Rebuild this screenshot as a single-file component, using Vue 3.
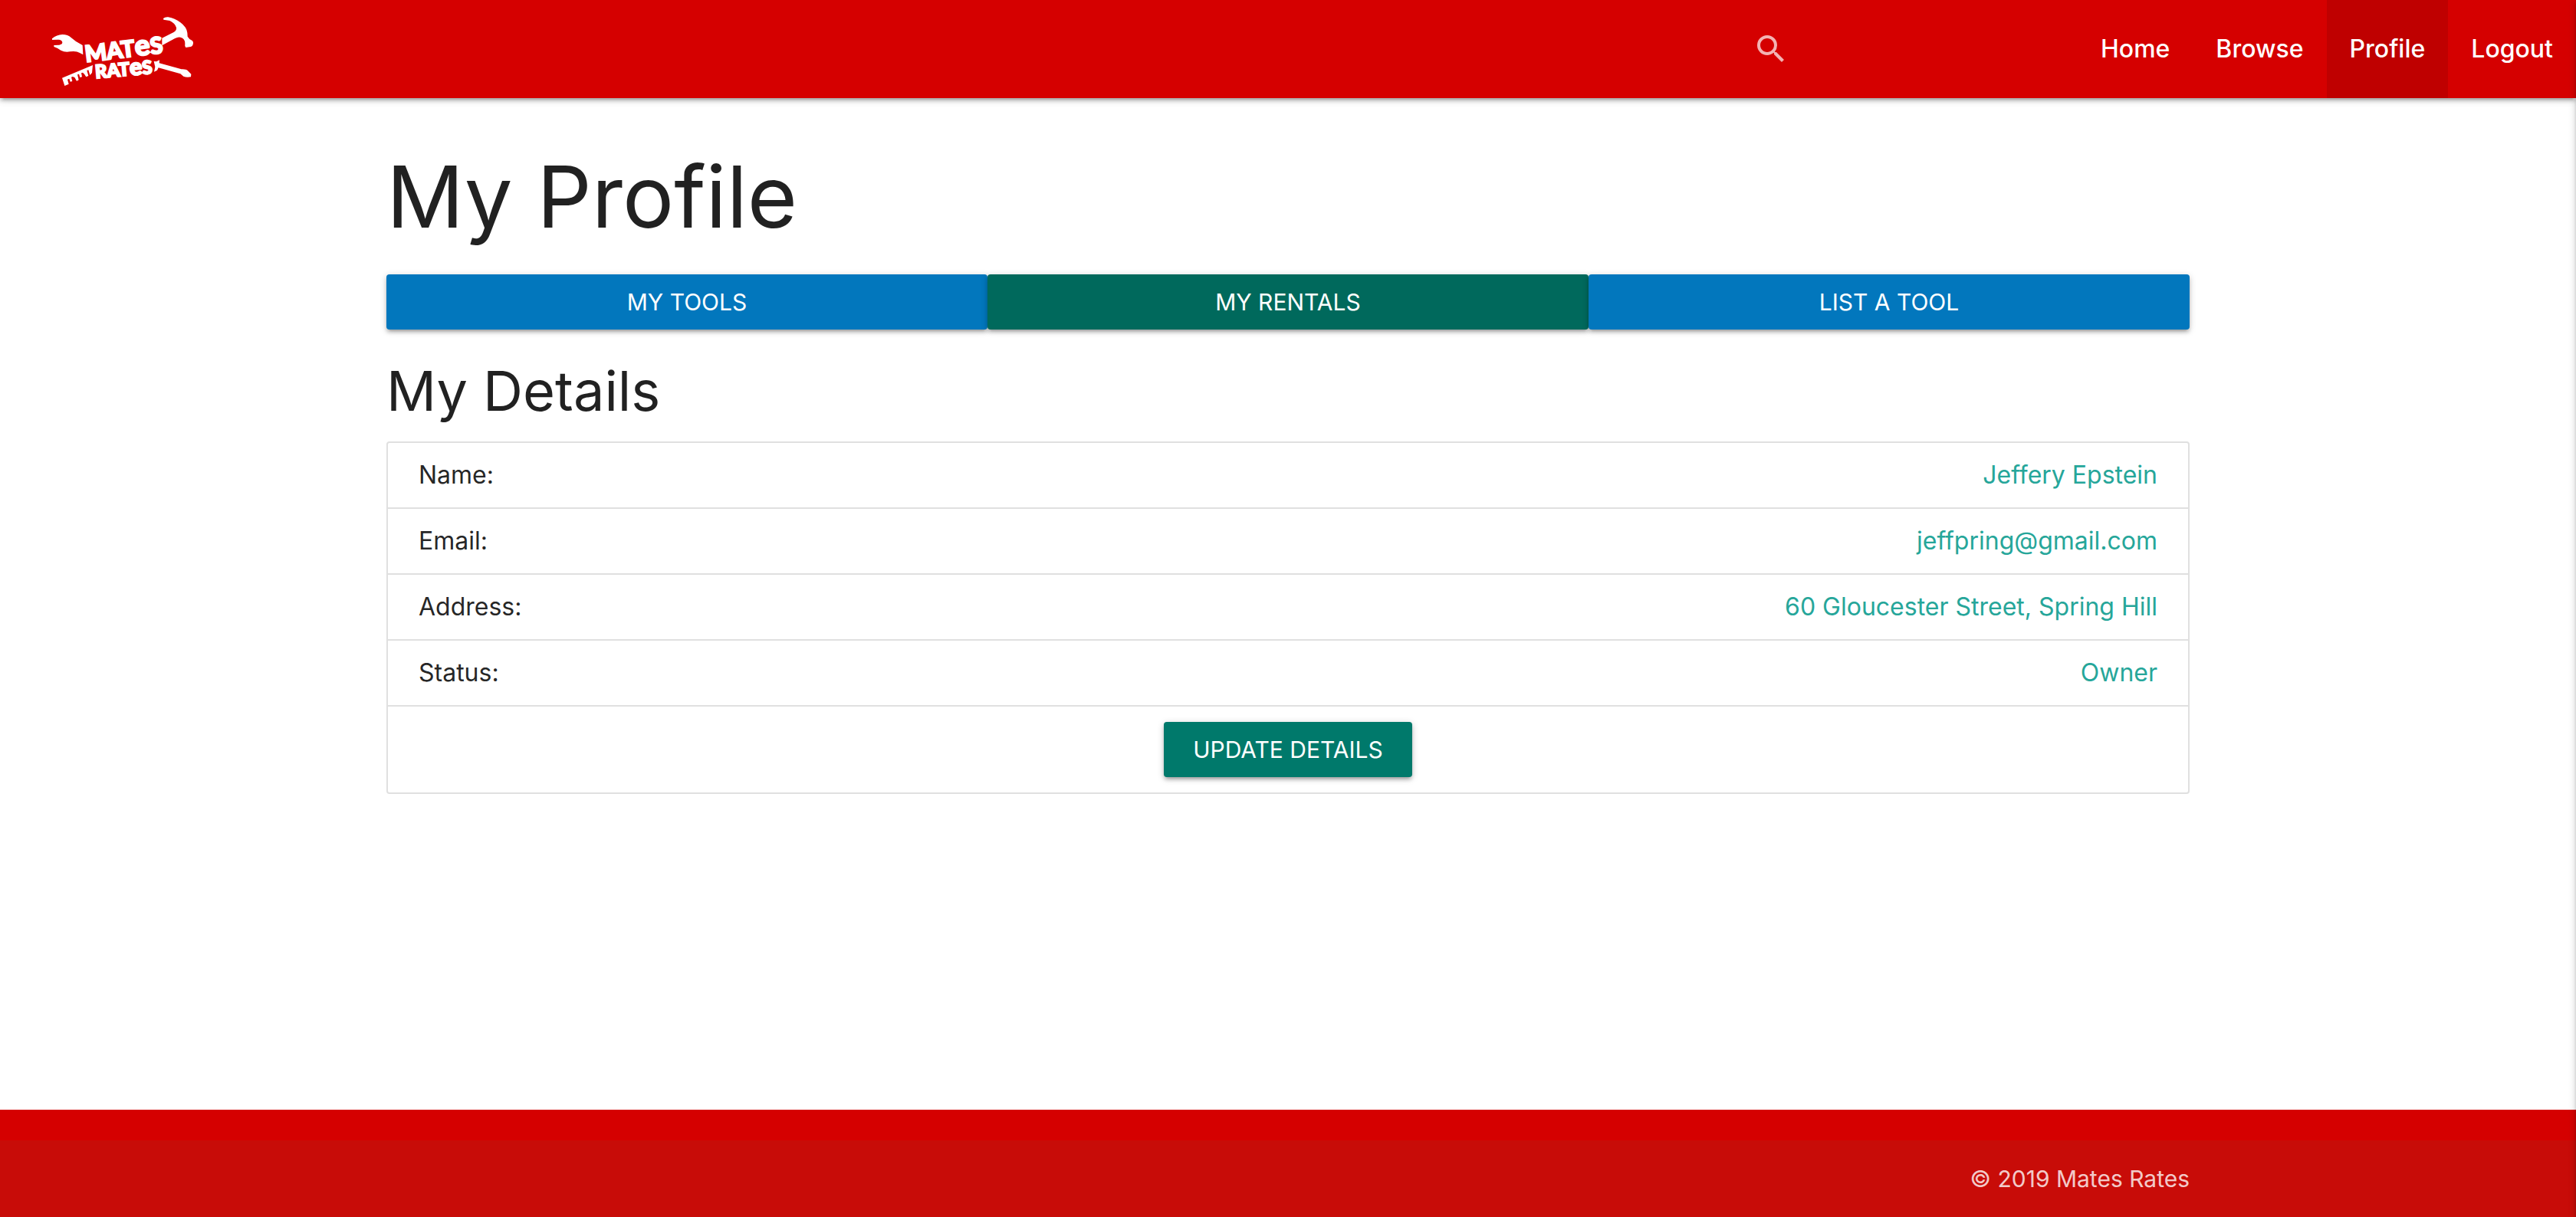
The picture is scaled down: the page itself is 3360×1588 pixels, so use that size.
<script setup>
const links = [
  { label: 'Home', href: '#home' },
  { label: 'Browse', href: '#browse' },
  { label: 'Profile', href: '#profile', active: true },
  { label: 'Logout', href: '#logout' },
]

const details = [
  { label: 'Name:', value: 'Jeffery Epstein' },
  { label: 'Email:', value: 'jeffpring@gmail.com' },
  { label: 'Address:', value: '60 Gloucester Street, Spring Hill' },
  { label: 'Status:', value: 'Owner' },
]
</script>

<template>
  <div class="page">
    <header class="navbar">
      <a class="brand" href="#home" aria-label="Mates Rates">
        <svg class="logo" viewBox="48 60 564 282" fill="#fff">
          <!-- wrench -->
          <path d="M54 151 Q72 136 94 135 Q116 135 128 147 Q146 164 173 177 L175 214 L162 207 Q148 198 124 202 Q104 206 88 197 Q76 188 61 183 L61 177 L82 176 Q94 174 94 166 Q92 155 78 155 L54 156 Z" />
          <!-- hammer -->
          <path d="M489 72 Q496 66 508 67 Q534 72 556 88 Q580 106 583 128 L584 143 Q590 154 602 159 Q608 164 605 174 Q602 184 591 184 L577 186 Q572 181 574 170 Q574 150 556 146 Q546 144 535 150 L484 178 L484 149 L530 126 Q542 119 540 108 Q534 90 514 81 L490 77 Z" />
          <!-- ruler -->
          <path d="M93 305 L213 255 L210 285 L202 294 L196 274 L190 276 L196 297 L187 301 L180 290 L174 284 L168 286 L171 301 L163 303 L159 290 L153 292 L158 313 L150 317 L142 303 L134 300 L129 302 L133 318 L125 320 L121 308 L114 311 L119 329 L103 336 Z" />
          <!-- screwdriver -->
          <path d="M452 240 L462 241 L474 235 L473 247 L560 271 Q578 270 584 276 L598 290 L597 301 Q580 304 568 299 L556 289 L470 265 L465 275 L453 281 L457 262 Z" />
          <text class="word" x="186" y="244" font-size="90" transform="rotate(-7 186 244)">MAT<tspan font-size="112">e</tspan>S</text>
          <text class="word" x="224" y="307" font-size="72" transform="rotate(-5 224 307)">RAT<tspan font-size="92">e</tspan>S</text>
        </svg>
      </a>
      <form class="search" role="search" @submit.prevent>
        <label for="search" aria-label="Search">
          <svg class="search-icon" viewBox="0 0 24 24" fill="currentColor">
            <path d="M15.5 14h-.79l-.28-.27A6.471 6.471 0 0 0 16 9.5 6.5 6.5 0 1 0 9.5 16c1.61 0 3.09-.59 4.23-1.57l.27.28v.79l5 4.99L20.49 19l-4.99-5zm-6 0C7.01 14 5 11.99 5 9.5S7.01 5 9.5 5 14 7.01 14 9.5 11.99 14 9.5 14z" />
          </svg>
        </label>
        <input id="search" type="search" />
      </form>
      <nav class="links">
        <a v-for="link in links" :key="link.label" :href="link.href" :class="{ active: link.active }">{{ link.label }}</a>
      </nav>
    </header>

    <main class="container">
      <h1>My Profile</h1>
      <div class="actions">
        <button type="button" class="btn blue">MY TOOLS</button>
        <button type="button" class="btn green">MY RENTALS</button>
        <button type="button" class="btn blue">LIST A TOOL</button>
      </div>
      <h2>My Details</h2>
      <div class="collection">
        <dl>
          <div v-for="item in details" :key="item.label" class="row">
            <dt>{{ item.label }}</dt>
            <dd>{{ item.value }}</dd>
          </div>
        </dl>
        <div class="update">
          <button type="button" class="btn teal">UPDATE DETAILS</button>
        </div>
      </div>
    </main>

    <footer class="footer">
      <div class="copyright">
        <p class="container">© 2019 Mates Rates</p>
      </div>
    </footer>

    <aside class="drawer" aria-hidden="true"></aside>
  </div>
</template>

<style>
body {
  margin: 0;
  background: #fff;
}
</style>

<style scoped>
.page {
  --depth: 0 4px 4px 0 rgba(0, 0, 0, 0.14), 0 6px 2px -4px rgba(0, 0, 0, 0.12), 0 2px 10px 0 rgba(0, 0, 0, 0.2);
  display: flex;
  flex-direction: column;
  min-height: 100vh;
  font-family: Inter, "Open Sans", sans-serif;
  font-size: 32px;
  line-height: 44px;
  color: rgba(0, 0, 0, 0.87);
}

.navbar {
  display: flex;
  align-items: center;
  height: 128px;
  background: #d50000;
  box-shadow: var(--depth);
}

.brand {
  margin: 0 auto 0 66px;
  padding-top: 6px;
}

.logo {
  display: block;
  width: 188px;
  height: 94px;
}

.word {
  font-family: Lato, sans-serif;
  font-weight: 900;
  stroke: #fff;
  stroke-width: 6;
}

.search {
  display: flex;
  align-items: center;
  width: 424px;
}

.search label {
  color: rgba(255, 255, 255, 0.7);
}

.search-icon {
  display: block;
  width: 48px;
  height: 48px;
}

.search input {
  flex: 1;
  min-width: 0;
  height: 128px;
  box-sizing: border-box;
  padding: 0 16px;
  border: 0;
  outline: 0;
  background: transparent;
  color: #fff;
  font: inherit;
}

.links {
  display: flex;
}

.links a {
  padding: 0 30px;
  line-height: 128px;
  color: #fff;
  font-weight: 500;
  text-decoration: none;
}

.links a.active {
  background: rgba(0, 0, 0, 0.1);
}

.container {
  width: 70%;
  margin: 0 auto;
}

main.container {
  flex: 1;
}

h1,
h2 {
  margin: 0;
  font-weight: 400;
}

h1 {
  padding: 68px 0 42px;
  font-size: 112px;
  line-height: 120px;
}

h2 {
  padding: 40px 0 26px;
  font-size: 72px;
  line-height: 80px;
}

.actions {
  display: grid;
  grid-template-columns: repeat(3, 1fr);
}

.btn {
  height: 72px;
  padding: 0 38px;
  border: 0;
  border-radius: 4px;
  box-shadow: var(--depth);
  color: #fff;
  font-family: inherit;
  font-size: 30px;
  line-height: 72px;
  cursor: pointer;
}

.blue {
  background: #0277bd;
}

.green {
  background: #00695c;
}

.teal {
  background: #00796b;
}

.collection {
  border: 2px solid #e0e0e0;
  border-radius: 4px;
}

dl {
  margin: 0;
}

.row {
  display: flex;
  justify-content: space-between;
  padding: 20px 40px;
  border-bottom: 2px solid #e0e0e0;
}

dd {
  margin: 0;
  color: #26a69a;
}

.update {
  display: flex;
  justify-content: center;
  padding: 20px 40px;
}

.footer {
  padding-top: 40px;
  background: #d50000;
}

.copyright {
  padding: 28px 0;
  background: #c80c08;
  color: rgba(255, 255, 255, 0.8);
  font-size: 30px;
  text-align: right;
}

.drawer {
  position: fixed;
  top: 0;
  left: 100%;
  width: 600px;
  height: 100%;
  background: #fff;
  box-shadow: var(--depth);
}
</style>
